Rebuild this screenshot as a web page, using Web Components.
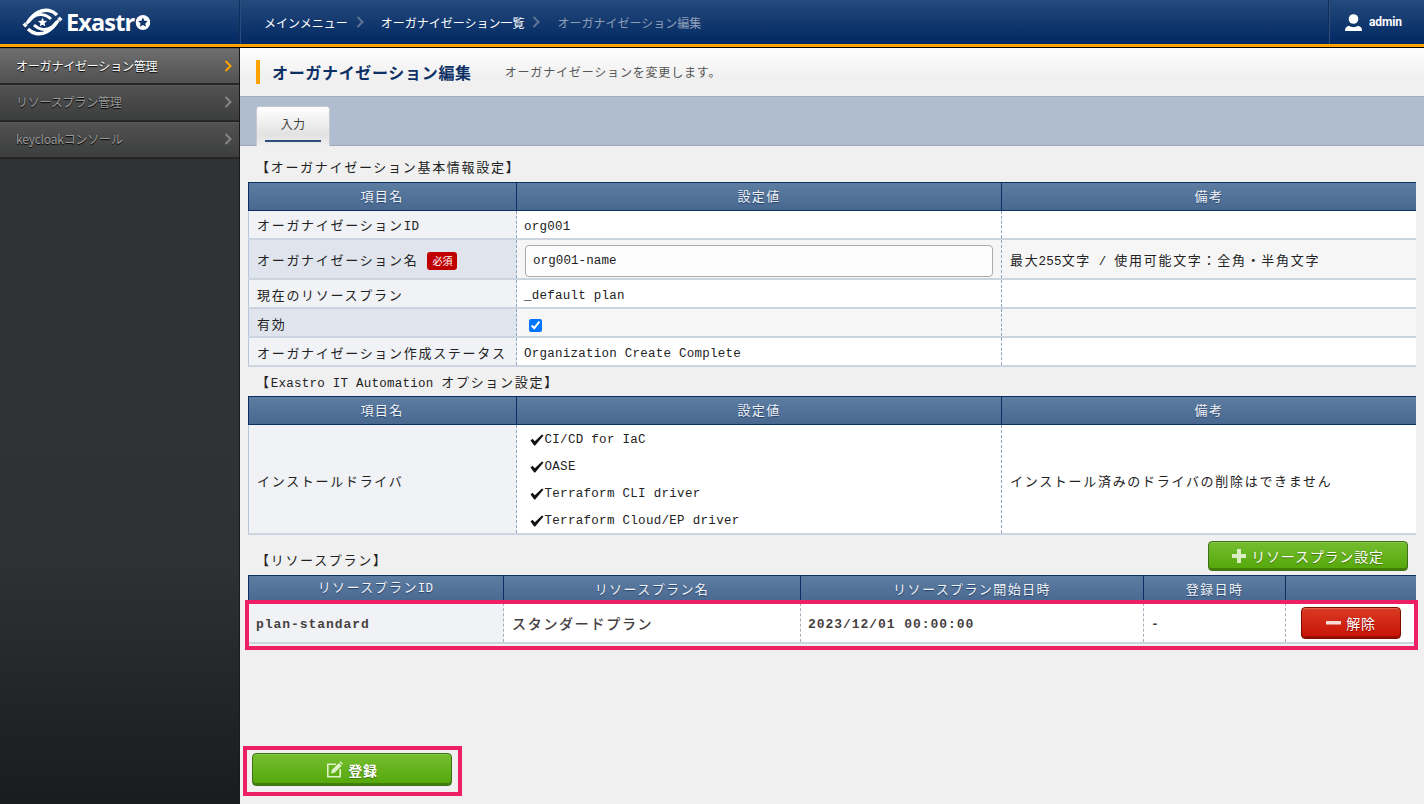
<!DOCTYPE html>
<html lang="ja"><head><meta charset="utf-8"><title>Exastro</title>
<style>
html,body{margin:0;height:100%;overflow:hidden}
body{font-family:"Liberation Sans","Noto Sans CJK JP",sans-serif;background:#f0f0f0}
</style></head><body>
<x-app>
  <x-topbar slot="top"></x-topbar>
  <x-sidenav slot="side">
    <x-navitem active>オーガナイゼーション管理</x-navitem>
    <x-navitem>リソースプラン管理</x-navitem>
    <x-navitem>keycloakコンソール</x-navitem>
  </x-sidenav>
  <x-pagetitle heading="オーガナイゼーション編集" sub="オーガナイゼーションを変更します。"></x-pagetitle>
  <x-tabbar label="入力"></x-tabbar>
  <x-content>
    <x-section style="--h:28px">【オーガナイゼーション基本情報設定】</x-section>
    <x-grid style="--cols:269px 485px 414px">
      <x-hrow><x-hcell>項目名</x-hcell><x-hcell>設定値</x-hcell><x-hcell>備考</x-hcell></x-hrow>
      <x-row h="29"><x-cell kind="th">オーガナイゼーション<x-l>ID</x-l></x-cell><x-cell><x-l>org001</x-l></x-cell><x-cell></x-cell></x-row>
      <x-row h="40" alt style="--pt:4px"><x-cell kind="th">オーガナイゼーション名<x-badge>必須</x-badge></x-cell><x-cell><x-field value="org001-name"></x-field></x-cell><x-cell>最大<x-l>255</x-l>文字<x-l>&nbsp;/&nbsp;</x-l>使用可能文字：全角・半角文字</x-cell></x-row>
      <x-row h="29"><x-cell kind="th">現在のリソースプラン</x-cell><x-cell><x-l>_default plan</x-l></x-cell><x-cell></x-cell></x-row>
      <x-row h="29" alt><x-cell kind="th">有効</x-cell><x-cell><x-check></x-check></x-cell><x-cell></x-cell></x-row>
      <x-row h="29"><x-cell kind="th">オーガナイゼーション作成ステータス</x-cell><x-cell><x-l>Organization Create Complete</x-l></x-cell><x-cell></x-cell></x-row>
    </x-grid>
    <x-section style="--top:2px;--h:27px">【<x-l>Exastro IT Automation </x-l>オプション設定】</x-section>
    <x-grid style="--cols:269px 485px 414px">
      <x-hrow><x-hcell>項目名</x-hcell><x-hcell>設定値</x-hcell><x-hcell>備考</x-hcell></x-hrow>
      <x-row h="110"><x-cell kind="th">インストールドライバ</x-cell>
        <x-cell><x-drivers><x-driver>CI/CD for IaC</x-driver><x-driver>OASE</x-driver><x-driver>Terraform CLI driver</x-driver><x-driver>Terraform Cloud/EP driver</x-driver></x-drivers></x-cell>
        <x-cell>インストール済みのドライバの削除はできません</x-cell></x-row>
    </x-grid>
    <x-plantools>
      <x-section style="--top:8px;--h:auto">【リソースプラン】</x-section>
      <x-btn icon="plus" w="200" h="30">リソースプラン設定</x-btn>
    </x-plantools>
    <x-mark>
      <x-grid style="--cols:256px 297px 343px 142px 130px">
        <x-hrow h="28"><x-hcell>リソースプラン<x-l>ID</x-l></x-hcell><x-hcell>リソースプラン名</x-hcell><x-hcell>リソースプラン開始日時</x-hcell><x-hcell>登録日時</x-hcell><x-hcell></x-hcell></x-hrow>
        <x-row h="41" style="--pt:0px"><x-cell kind="th" strong><x-l>plan-standard</x-l></x-cell><x-cell strong>スタンダードプラン</x-cell><x-cell strong><x-l>2023/12/01 00:00:00</x-l></x-cell><x-cell strong><x-l>-</x-l></x-cell><x-cell center><x-btn icon="minus" color="red" w="100" h="32">解除</x-btn></x-cell></x-row>
      </x-grid>
    </x-mark>
    <x-footer><x-btn icon="edit" w="200" h="33" bold>登録</x-btn></x-footer>
  </x-content>
</x-app>
<script>
function def(name, css, html, init){
  customElements.define(name, class extends HTMLElement{
    constructor(){super();this.attachShadow({mode:'open'});}
    connectedCallback(){
      if(this._d)return;this._d=1;
      const h=typeof html==='function'?html(this):html;
      this.shadowRoot.innerHTML='<style>'+css+'</style>'+h;
      if(init)init(this);
    }
  });
}
const BASE='"Noto Sans CJK JP","Liberation Sans",sans-serif';
const MONO='"Liberation Mono","Noto Sans CJK JP",monospace';
def('x-app',`:host{display:grid;grid-template-columns:240px 1fr;grid-template-rows:48px 756px;height:804px;overflow:hidden}
 ::slotted([slot=top]){grid-column:1/3}
 .main{display:flex;flex-direction:column;min-height:0;background:#f0f0f0}`,
 `<slot name="top"></slot><slot name="side"></slot><div class="main"><slot></slot></div>`);
def('x-topbar',`:host{display:flex;height:48px;box-sizing:border-box;background:linear-gradient(#254a7c,#012862 44px);border-bottom:1px solid #000;position:relative;color:#fff;font:12px ${BASE}}
 .bar{position:absolute;left:0;right:0;top:44px;height:3px;background:#ffa200}
 .logo{width:240px;height:44px;box-sizing:border-box;border-right:1px solid #0f2e5c;box-shadow:1px 0 0 #2b4c7c;display:flex;align-items:center;padding-left:22px;gap:3px}
 .word{font:700 24px/1 "Open Sans",sans-serif;letter-spacing:-.9px;color:#fff;display:flex;align-items:center;transform:scaleX(.98);transform-origin:left}
 .crumbs{flex:1;display:flex;align-items:center;height:44px;padding-left:24px}
 .crumbs span{white-space:nowrap}
 .sep{width:8px;height:12px;margin:0 17px 0 8px}
 .cur{color:#8e9fb8}
 .user{width:96px;height:44px;box-sizing:border-box;border-left:1px solid #0f2e5c;box-shadow:inset 1px 0 0 #2b4c7c;display:flex;align-items:center;gap:7px;padding-left:16px;font:700 12px "Roboto",sans-serif;letter-spacing:-.1px}`,
 `<div class="logo">
   <svg width="41" height="28" viewBox="0 0 41 28" fill="none" stroke="#fff">
     <g id="h"><path d="M6 14C12 5 20 1 27 2.500 30 3 33 5 35 7" stroke-width="3.400"/><path d="M2 18L11 9C16 5 24 6 29 11" stroke-width="3"/><path d="M.3 16.800l3 3 2.500-2.500-3-3z" fill="#fff" stroke="#012862" stroke-width=".5"/></g>
     <g transform="rotate(180 20.500 14)"><path d="M6 14C12 5 20 1 27 2.500 30 3 33 5 35 7" stroke-width="3.400"/><path d="M2 18L11 9C16 5 24 6 29 11" stroke-width="3"/><path d="M.3 16.800l3 3 2.500-2.500-3-3z" fill="#fff" stroke="#012862" stroke-width=".5"/></g>
     <path d="M20.500 9.800l1.300 2.900 3.200.4-2.400 2.100.7 3.100-2.800-1.600-2.800 1.600.7-3.100-2.400-2.100 3.200-.4z" fill="#fff" stroke="none"/>
   </svg>
   <span class="word">Exastr<svg width="15" height="15" viewBox="0 0 15 15" style="margin-left:1.500px"><circle cx="7.500" cy="7.500" r="7.500" fill="#fff"/><path d="M7.500 2.600l1.500 3.100 3.400.4-2.500 2.300.7 3.300-3.100-1.700-3.100 1.700.7-3.300L2.600 6.100 6 5.700z" fill="#0f356b"/></svg></span>
  </div>
  <div class="crumbs"><span>メインメニュー</span><svg class="sep" viewBox="0 0 8 12" fill="none"><path d="M1.500 1l5 5-5 5" stroke="#5e7596" stroke-width="2"/></svg>
   <span>オーガナイゼーション一覧</span><svg class="sep" viewBox="0 0 8 12" fill="none"><path d="M1.500 1l5 5-5 5" stroke="#5e7596" stroke-width="2"/></svg>
   <span class="cur">オーガナイゼーション編集</span></div>
  <div class="user"><svg width="17" height="17" viewBox="0 0 17 17" fill="#fff"><circle cx="8.500" cy="5" r="4.800"/><path d="M0 17c0-3 1-4.500 4-5.200 1.400 1 3 1.400 4.500 1.400s3.100-.4 4.500-1.400c3 .7 4 2.200 4 5.200z"/></svg>admin</div>
  <div class="bar"></div>`);
def('x-sidenav',`:host{display:block;background:linear-gradient(#313234,#303133 67%,#1a1b1d);border-right:1px solid #1a1a1a;box-sizing:border-box}`,`<slot></slot>`);
def('x-navitem',`:host{display:flex;align-items:center;justify-content:space-between;height:37px;box-sizing:border-box;padding:0 7px 2px 16px;background:linear-gradient(#515251,#3c3d3d);border-bottom:1px solid #222;box-shadow:inset 0 -1px 0 #2a2a2a,inset 0 1px 0 #5c5c5c;color:#9a9a9a;font:12px/1 ${BASE};letter-spacing:-.2px;text-shadow:0 1px 1px #000}
 :host([active]){background:linear-gradient(#6e6f6e,#4f504f);color:#fff;padding-bottom:0}
 svg{width:8px;height:12px;stroke:#858585}
 :host([active]) svg{stroke:#ffa200}`,
 `<span><slot></slot></span><svg viewBox="0 0 8 12" fill="none"><path d="M1.500 1l5 5-5 5" stroke-width="2"/></svg>`);
def('x-pagetitle',`:host{display:flex;align-items:center;height:48px;box-sizing:border-box;padding-left:16px;background:linear-gradient(#fff,#f0f0f0 30px)}
 i{width:4px;height:24px;background:#ffa200;margin-right:12px}
 b{font:700 16px/1 ${BASE};letter-spacing:.67px;color:#0c3064}
 span{font:12px/1 ${BASE};letter-spacing:.82px;color:#555;margin-left:33px}`,
 el=>`<i></i><b>${el.getAttribute('heading')}</b><span>${el.getAttribute('sub')}</span>`);
def('x-tabbar',`:host{display:flex;align-items:flex-end;height:50px;box-sizing:border-box;padding-left:16px;background:#b0bccf;border-top:1px solid #9fadc3;border-bottom:1px solid #a0a9b6}
 div{width:74px;height:40px;box-sizing:border-box;margin-bottom:-1px;background:linear-gradient(#fff,#e2e2e2 70%,#f0f0f0);border:1px solid #c4c9d2;border-bottom:0;border-radius:3px 3px 0 0;padding:0 8px;display:flex}
 span{flex:1;display:block;text-align:center;font:12px/33px ${BASE};color:#444;height:33px;border-bottom:2px solid #2d4f7c;box-sizing:content-box;letter-spacing:.3px}`,
 el=>`<div><span>${el.getAttribute('label')}</span></div>`);
def('x-content',`:host{display:flex;flex-direction:column;flex:1;min-height:0;padding:8px 8px 18px;box-sizing:border-box;color:#222}`,`<slot></slot>`);
def('x-section',`:host{display:block;height:var(--h,27px);margin-top:var(--top,0);padding-left:8px;white-space:nowrap;font:13px/26px ${BASE};letter-spacing:1.700px;color:#222}`,`<slot></slot>`);
def('x-l',`:host{font-family:${MONO};font-size:12.5px;letter-spacing:.25px;white-space:pre}`,`<slot></slot>`);
def('x-grid',`:host{display:block}`,`<slot></slot>`);
def('x-hrow',`:host{display:grid;grid-template-columns:var(--cols);box-sizing:border-box;height:var(--rh,29px);background:linear-gradient(#5e7da2,#486890);border:1px solid #0c3064;border-width:1px 0 1px 0;box-shadow:inset 1px 0 0 #0c3064}`,`<slot></slot>`,
 el=>{if(el.getAttribute('h'))el.style.setProperty('--rh',el.getAttribute('h')+'px');});
def('x-hcell',`:host{display:flex;align-items:center;justify-content:center;border-right:1px solid #0c3064;padding-bottom:2px;color:#f2f4f8;font:13px/1 ${BASE};letter-spacing:1.400px;text-shadow:0 1px 1px #24406a;box-sizing:border-box;white-space:nowrap}
 :host(:last-child){border-right:0}`,`<span><slot></slot></span>`);
def('x-row',`:host{display:grid;grid-template-columns:var(--cols);grid-template-rows:minmax(0,1fr);box-sizing:border-box;background:#fff;--th:#f0f2f6;border-bottom:2px solid #ccd4e0}
 :host([alt]){background:#f6f6f7;--th:#e0e5ed}`,`<slot></slot>`,
 el=>{el.style.height=el.getAttribute('h')+'px';});
def('x-cell',`:host{display:flex;align-items:center;padding:var(--pt,2px) 8px 0;box-sizing:border-box;min-width:0;min-height:0;white-space:nowrap;border-right:1px dashed #8ea6c4;font:13px/1 ${BASE};letter-spacing:1.700px;color:#222}
 :host(:first-child){box-shadow:inset 1px 0 0 #b8c6da}
 :host(:last-child){border-right:0}
 :host([kind=th]){background:var(--th)}
 :host([kind=th]:not([strong])){padding-left:9px}
 :host(:not([kind=th])) ::slotted(x-l:first-child){margin-left:-1px}
 :host([strong]){font-size:14px;font-weight:500;color:#46403f;letter-spacing:1.700px;border-right-color:#a6adb8}
 :host([strong]) ::slotted(x-l){font-weight:700;font-size:13px;letter-spacing:.95px}
 .in{flex:1;min-width:0;display:block}
 :host([center]) .in{display:flex;justify-content:center}`,`<span class="in"><slot></slot></span>`);
def('x-badge',`:host{display:inline-block;width:30px;height:18px;margin-left:9px;border-radius:3px;background:#c00000;color:#fff;font:10px/18px ${BASE};letter-spacing:0;text-align:center;vertical-align:middle}`,`<slot></slot>`);
def('x-field',`:host{display:block;width:100%}
 input{display:block;width:100%;height:32px;box-sizing:border-box;border:1px solid #aaa;border-radius:4px;background:#fdfdfd;padding:0 7px;font:12.5px ${MONO};letter-spacing:.1px;color:#222;outline:0}`,
 el=>`<input type="text" value="${el.getAttribute('value')}">`);
def('x-check',`:host{display:flex}
 input{margin:4px 0 0 4px;width:13px;height:13px}`,`<input type="checkbox" checked>`);
def('x-drivers',`:host{display:flex;flex-direction:column;margin:1px 0 0 5px}`,`<slot></slot>`);
def('x-driver',`:host{display:flex;align-items:center;height:27px;font:12.5px/1 ${MONO};letter-spacing:.3px;color:#222}
 svg{width:14px;height:12px;margin-right:.5px}`,
 `<svg viewBox="0 0 14 12"><path d="M0.500 6.500l2-1.800 2.300 2.600L12 .5l1.500 1L5.200 11.500h-1z" fill="#111"/></svg><span><slot></slot></span>`);
def('x-plantools',`:host{display:flex;align-items:center;justify-content:space-between;height:30px;margin:6px 8px 4px 0}`,`<slot></slot>`);
def('x-mark',`:host{display:block;position:relative}
 i{position:absolute;left:-3px;right:-2px;top:25px;height:50px;box-sizing:border-box;border:4px solid #ee1f64;pointer-events:none}`,`<slot></slot><i></i>`);
const ICONS={
 plus:'<svg width="14" height="14" viewBox="0 0 14 14"><path d="M5 0h4v5h5v4H9v5H5V9H0V5h5z" fill="#d9eec3"/></svg>',
 minus:'<svg width="15" height="4" viewBox="0 0 15 4"><rect width="15" height="3.500" rx=".5" fill="#fbdcd6"/></svg>',
 edit:'<svg width="17" height="17" viewBox="0 0 17 17"><path d="M1 2.500h9v1.600H2.600v10.800h10.800V8H15v8.500H1z" fill="#dff2c8"/><path d="M5 12.500l.8-3.500 7-7 2.800 2.800-7 7z M13.500 1.300l1-1 2.500 2.500-1 1z" fill="#dff2c8"/></svg>'};
def('x-btn',`:host{display:inline-flex;flex:none;align-items:center;justify-content:center;gap:5px;box-sizing:border-box;border-radius:4px;color:#fff;font:14px/1 ${BASE};letter-spacing:.8px;
   background:linear-gradient(#75bd2f,#54a70a);border:1px solid #3f6f16;box-shadow:inset 0 -2px 0 #427f0a,inset 0 1px 0 #8ac94e;text-shadow:0 1px 1px #3c7008}
 :host([color=red]){background:linear-gradient(#d93b24,#c81203);border-color:#7c0e00;box-shadow:inset 0 -2px 0 #9b0f02,inset 0 1px 0 #e4624e;text-shadow:0 1px 1px #800}
 :host([bold]){font-weight:700}`,
 el=>ICONS[el.getAttribute('icon')]+'<slot></slot>',
 el=>{el.style.width=el.getAttribute('w')+'px';el.style.height=el.getAttribute('h')+'px';});
def('x-footer',`:host{display:block;position:relative;margin-top:auto;margin-left:4px;width:200px}
 i{position:absolute;left:-9px;right:-10px;top:-7px;bottom:-10px;border:4px solid #ee1f64;pointer-events:none}`,`<slot></slot><i></i>`);
</script>
</body></html>
